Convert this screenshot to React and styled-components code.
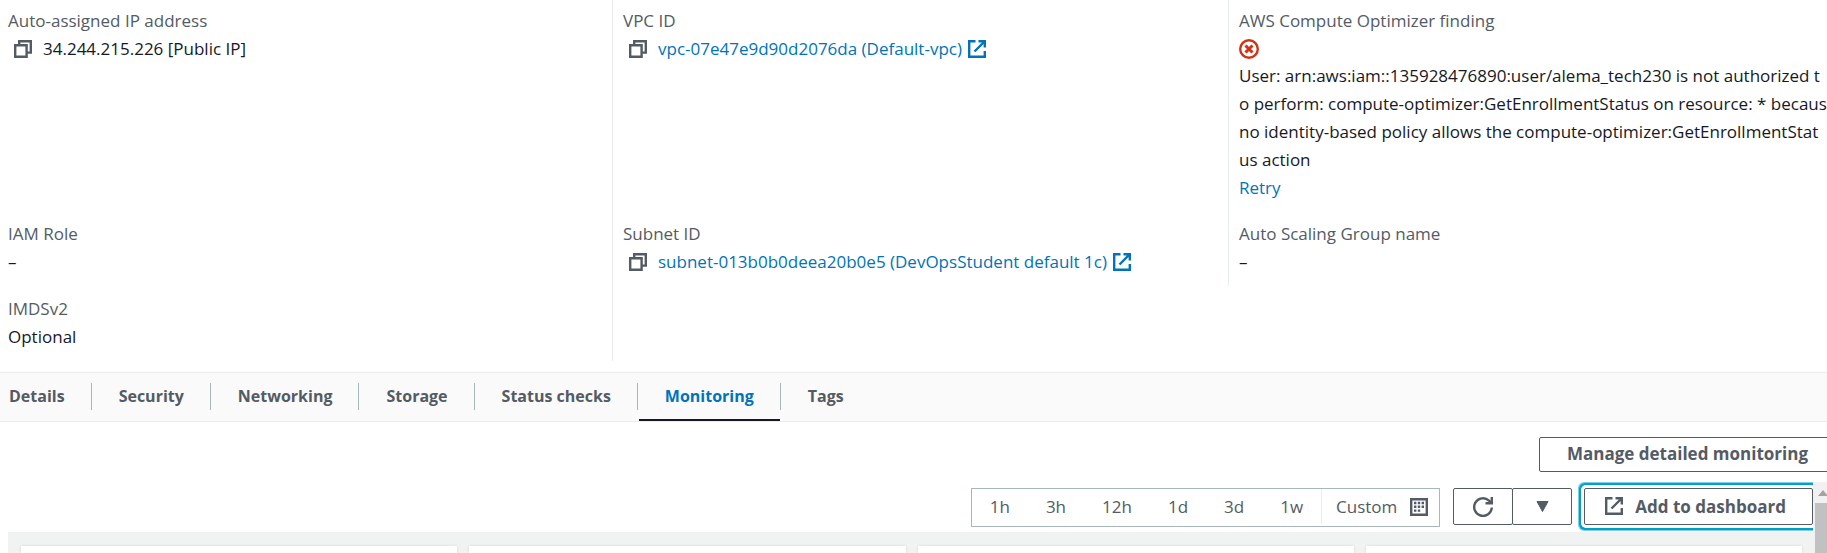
import React from 'react';
import styled, { createGlobalStyle, css } from 'styled-components';

const color = {
  text: '#16191f',
  muted: '#545b64',
  link: '#0073bb',
  error: '#d13212',
  focus: '#00a1c9',
  line: '#eaeded',
  control: '#aab7b8',
  panel: '#f1f3f3',
};

const GlobalStyle = createGlobalStyle`
  *, *::before, *::after { box-sizing: border-box; }
  body {
    margin: 0;
    background: #fff;
    color: ${color.text};
    font-family: 'Open Sans', 'Noto Sans', sans-serif;
    font-size: 17px;
    line-height: 27px;
  }
  button { font: inherit; color: inherit; background: none; border: 0; padding: 0; margin: 0; cursor: pointer; }
`;

const Page = styled.div`
  display: flex;
  flex-direction: column;
  min-height: 100vh;
  overflow-x: clip;
`;

/* ---------- Instance summary ---------- */

const Summary = styled.section`
  display: grid;
  grid-template-columns: repeat(3, minmax(0, 1fr));
  margin: 0 -17px 11px -4px;
  white-space: nowrap;
`;

const Cell = styled.dl`
  margin: 0;
  padding: ${(p) => (p.$first ? '7px' : '9px')} 0 ${(p) => (p.$first ? '10px' : '11px')} ${(p) => (p.$divider ? '10px' : '11px')};
  border-left: 1px solid ${(p) => (p.$divider ? color.line : 'transparent')};
`;

const Label = styled.dt`
  color: ${color.muted};
  line-height: 28px;
`;

const Value = styled.dd`
  margin: 0;
`;

const IconLine = styled.div`
  display: flex;
  align-items: center;
  padding-left: ${(p) => p.$indent || 0}px;
  height: 27px;
  color: ${(p) => (p.$error ? color.error : 'inherit')};
`;

const CopyButton = styled.button`
  display: flex;
  margin-right: 11px;
  color: ${color.muted};
`;

const Link = styled.a`
  display: inline-flex;
  align-items: center;
  gap: 6px;
  color: ${color.link};
  text-decoration: none;
`;

const Message = styled.p`
  margin: 0;
  line-height: 28px;
`;

/* ---------- Tabs ---------- */

const TabBar = styled.nav`
  display: flex;
  height: 50px;
  background: #fafafa;
  border-top: 1px solid ${color.line};
  border-bottom: 1px solid ${color.line};
`;

const Tab = styled.button`
  position: relative;
  height: 48px;
  padding: 0 27px 2px ${(p) => (p.$first ? '9px' : '27px')};
  font-size: 16px;
  font-weight: 700;
  color: ${(p) => (p.$active ? color.link : color.muted)};

  &:not(:last-child)::after {
    content: '';
    position: absolute;
    top: 10px;
    right: 0;
    width: 1px;
    height: 27px;
    background: ${color.control};
  }

  ${(p) =>
    p.$active &&
    css`
      &::before {
        content: '';
        position: absolute;
        left: 1px;
        right: 1px;
        bottom: 0;
        height: 2px;
        background: ${color.text};
      }
    `}
`;

/* ---------- Monitoring ---------- */

const Actions = styled.div`
  display: flex;
  justify-content: flex-end;
  margin-right: -9px;
  padding: 15px 0 10px;
`;

const buttonFrame = css`
  display: flex;
  align-items: center;
  justify-content: center;
  border: 1px solid ${color.muted};
  border-radius: 2px;
  background: #fff;
  color: ${color.muted};
  font-weight: 700;
`;

const Button = styled.button`
  ${buttonFrame}
  height: 35px;
  padding: 0 27px 2px;
`;

const Scroller = styled.div`
  display: flex;
  flex: 1;
  margin-right: -4px;
`;

const Content = styled.div`
  display: flex;
  flex-direction: column;
  flex: 1;
  min-width: 0;
  padding-left: 8px;
  overflow-x: clip;
`;

const Toolbar = styled.div`
  display: flex;
  justify-content: flex-end;
  align-items: flex-start;
  padding: 6px 0 5px;
  color: ${color.muted};
`;

const RangeGroup = styled.div`
  display: flex;
  height: 39px;
  border: 1px solid ${color.control};
`;

const Range = styled.button`
  padding: 0 18px 2px;
`;

const CustomRange = styled.button`
  display: flex;
  align-items: center;
  gap: 13px;
  height: 35px;
  padding: 0 11px 0 14px;
  border-left: 1px solid ${color.line};
`;

const SplitButton = styled.div`
  display: flex;
  margin-left: 13px;
`;

const SplitPart = styled.button`
  ${buttonFrame}
  width: 60px;
  height: 37px;
  & + & { margin-left: -1px; }
`;

const DashboardButton = styled.button`
  ${buttonFrame}
  gap: 12px;
  height: 37px;
  margin-left: 12px;
  padding: 0 26px 1px 20px;
  box-shadow: 0 0 0 3px #fff, 0 0 0 5px ${color.focus}, 0 0 0 6px #7fd0e4;
`;

const Panel = styled.div`
  display: grid;
  grid-template-columns: repeat(4, minmax(0, 1fr));
  gap: 12px;
  flex: 1;
  min-height: 22px;
  padding: 14px 11px 0 13px;
  background: ${color.panel};
`;

const Card = styled.article`
  background: #fff;
  box-shadow: 0 0 3px rgba(0, 28, 36, 0.12);
`;

const ScrollTrack = styled.div`
  flex: 0 0 18px;
  display: flex;
  flex-direction: column;
  padding-left: 2px;
  background: #f1f1f1;
`;

const ScrollArrow = styled.div`
  display: flex;
  align-items: center;
  justify-content: center;
  height: 21px;
`;

const ScrollThumb = styled.div`
  flex: 1;
  background: #c1c1c1;
`;

/* ---------- Icons ---------- */

const Svg = ({ size = 18, children, ...rest }) => (
  <svg width={size} height={size} viewBox="0 0 18 18" fill="none" stroke="currentColor" strokeWidth="2.4" aria-hidden="true" {...rest}>
    {children}
  </svg>
);

const CopyIcon = () => (
  <Svg>
    <path d="M1.200 5.200h11.400v11.600H1.200z" />
    <path d="M5.200 5V1.200h11.600v11.400H13" />
  </Svg>
);

const ExternalIcon = () => (
  <Svg>
    <path d="M7.500 1.200H1.200v15.600h15.600V11" />
    <path d="M10.500 1.200h6.300v6.300M16.500 1.500 6.500 11.500" />
  </Svg>
);

const ErrorIcon = () => (
  <Svg size={20} viewBox="0 0 20 20">
    <circle cx="10" cy="10" r="8.800" />
    <path d="m6.500 6.500 7 7m0-7-7 7" strokeWidth="3" />
  </Svg>
);

const CalendarIcon = () => (
  <Svg>
    <path d="M1.200 1.200h15.600v15.600H1.200z" />
    <path d="M7.800 5h2.400M11.600 5H14M4 8.800h2.400M7.800 8.800h2.400M11.600 8.800H14M4 12.600h2.400M7.800 12.600h2.400M4 5h2.400" />
  </Svg>
);

const RefreshIcon = () => (
  <Svg size={20} viewBox="0 0 20 20">
    <path d="M18.800 10.500a8.800 8.800 0 1 1-2.800-6.900L18 5.500" />
    <path d="M18.800 0v6.300h-6.300" />
  </Svg>
);

const CaretIcon = () => (
  <Svg size={13} viewBox="0 0 13 13">
    <path d="M1 1.500h11l-5.500 10z" fill="currentColor" strokeWidth="1" strokeLinejoin="round" />
  </Svg>
);

/* ---------- Composition ---------- */

function Resource({ href, children }) {
  return (
    <IconLine $indent={6}>
      <CopyButton aria-label="Copy">
        <CopyIcon />
      </CopyButton>
      {href ? (
        <Link href={href}>
          {children}
          <ExternalIcon />
        </Link>
      ) : (
        <span>{children}</span>
      )}
    </IconLine>
  );
}

const Field = ({ label, children, ...cell }) => (
  <Cell {...cell}>
    <Label>{label}</Label>
    <Value>{children}</Value>
  </Cell>
);

const tabs = ['Details', 'Security', 'Networking', 'Storage', 'Status checks', 'Monitoring', 'Tags'];
const ranges = ['1h', '3h', '12h', '1d', '3d', '1w'];

export default function App() {
  const [active, setActive] = React.useState('Monitoring');

  return (
    <Page>
      <GlobalStyle />
      <Summary>
        <Field label="Auto-assigned IP address" $first>
          <Resource>34.244.215.226 [Public IP]</Resource>
        </Field>
        <Field label="VPC ID" $first $divider>
          <Resource href="#vpc">vpc-07e47e9d90d2076da (Default-vpc)</Resource>
        </Field>
        <Field label="AWS Compute Optimizer finding" $first $divider>
          <IconLine $error>
            <ErrorIcon />
          </IconLine>
          <Message>
            User: arn:aws:iam::135928476890:user/alema_tech230 is not authorized t
            <br />
            o perform: compute-optimizer:GetEnrollmentStatus on resource: * because
            <br />
            no identity-based policy allows the compute-optimizer:GetEnrollmentStat
            <br />
            us action
          </Message>
          <Link href="#retry">Retry</Link>
        </Field>

        <Field label="IAM Role">–</Field>
        <Field label="Subnet ID" $divider>
          <Resource href="#subnet">subnet-013b0b0deea20b0e5 (DevOpsStudent default 1c)</Resource>
        </Field>
        <Field label="Auto Scaling Group name" $divider>–</Field>

        <Field label="IMDSv2">Optional</Field>
        <Cell $divider />
      </Summary>

      <TabBar role="tablist">
        {tabs.map((name, i) => (
          <Tab
            key={name}
            role="tab"
            aria-selected={name === active}
            $first={i === 0}
            $active={name === active}
            onClick={() => setActive(name)}
          >
            {name}
          </Tab>
        ))}
      </TabBar>

      <Actions>
        <Button>Manage detailed monitoring</Button>
      </Actions>

      <Scroller>
        <Content>
          <Toolbar>
            <RangeGroup>
              {ranges.map((range) => (
                <Range key={range}>{range}</Range>
              ))}
              <CustomRange>
                Custom
                <CalendarIcon />
              </CustomRange>
            </RangeGroup>
            <SplitButton>
              <SplitPart aria-label="Refresh">
                <RefreshIcon />
              </SplitPart>
              <SplitPart aria-label="Refresh options">
                <CaretIcon />
              </SplitPart>
            </SplitButton>
            <DashboardButton>
              <ExternalIcon />
              Add to dashboard
            </DashboardButton>
          </Toolbar>
          <Panel>
            <Card />
            <Card />
            <Card />
            <Card />
          </Panel>
        </Content>
        <ScrollTrack>
          <ScrollArrow>
            <svg width="10" height="6" viewBox="0 0 10 6" aria-hidden="true">
              <path d="M5 0l5 6H0z" fill="#a3a3a3" />
            </svg>
          </ScrollArrow>
          <ScrollThumb />
        </ScrollTrack>
      </Scroller>
    </Page>
  );
}
